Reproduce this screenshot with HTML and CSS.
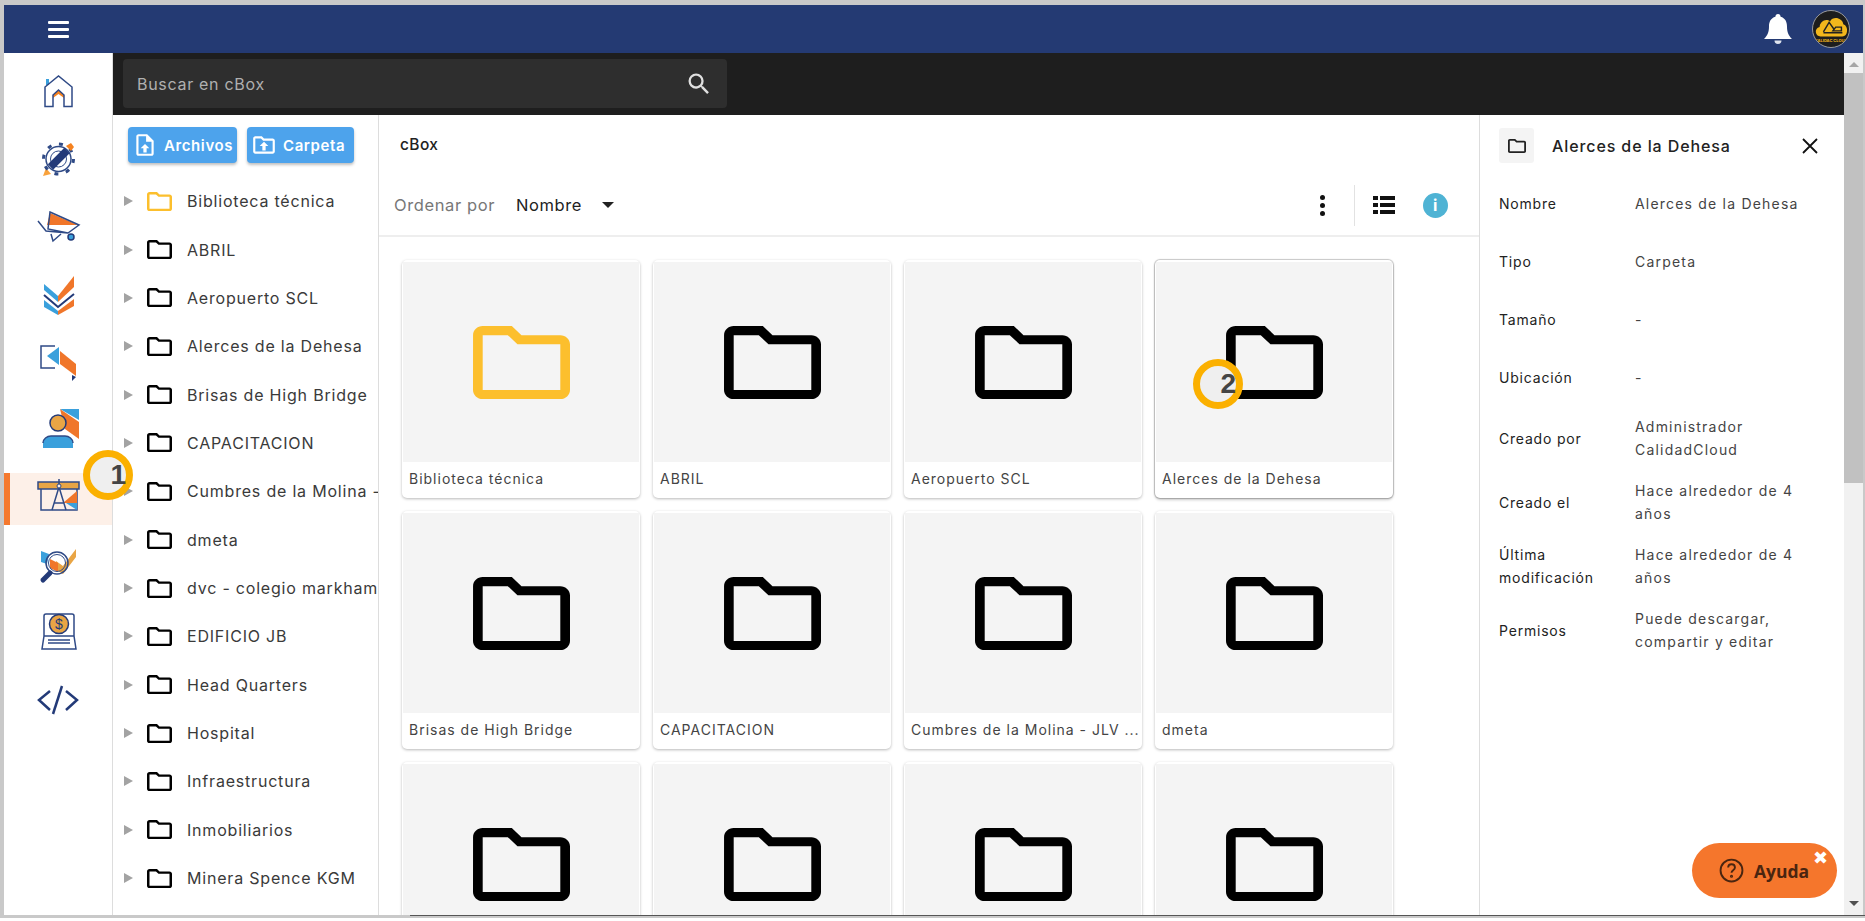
FILE: index.html
```html
<!DOCTYPE html>
<html lang="es">
<head>
  <meta charset="UTF-8" />
  <title>cBox</title>
  <link rel="stylesheet" href="styles.css">
</head>
<body>
  <svg class="defs" width="0" height="0">
    <symbol id="folder" viewBox="2 4 20 16" preserveAspectRatio="none">
      <path d="M9.17 6l2 2H20v10H4V6h5.17M10 4H4c-1.1 0-1.99.9-1.99 2L2 18c0 1.1.9 2 2 2h16c1.1 0 2-.9 2-2V8c0-1.1-.9-2-2-2h-8l-2-2z" />
    </symbol>
  </svg>

  <div class="frame">
    <header class="topbar">
      <div class="burger"><span></span><span></span><span></span></div>
      <div class="topbar-right">
        <svg class="bell" viewBox="0 0 28 30"><path d="M14 0c-1.6 0-2.6 1.2-2.6 2.8C6.800 4 5 8 5 12.500c0 5.500-1.500 9-5 12.500h28c-3.500-3.500-5-7-5-12.500C23 8 21.200 4 16.600 2.800 16.600 1.200 15.600 0 14 0z" fill="#fff"/><path d="M10.500 26.500a3.500 3.500 0 0 0 7 0z" fill="#dfe4ee"/></svg>
        <div class="avatar">
          <svg viewBox="0 0 38 38">
            <path d="M8 27c-6 0-7-9-1-10 0-6 7-10 11-6 3-6 13-4 14 3 6 2 5 13-1 13z" fill="#f3b71c"/>
            <path d="M11 22l6-10 5 7M17 12l-3 5M21 21h9v-4h-6zM11 23h20" fill="none" stroke="#222" stroke-width="1.500"/>
          </svg>
          <span>CALIDAC CLOUD</span>
        </div>
      </div>
    </header>

    <div class="body-row">
      <nav class="sidenav">
        <div class="nav-item">
          <svg viewBox="0 0 64 52"><rect x="20" y="14" width="3" height="6" fill="#3aa0dc"/><path d="M27 30l5.500-5 5.500 5v3l-5.500-4-5.500 4z" fill="#f5821f"/><path d="M19 41.500V22L32.500 11 46 22v19.500h-8V30l-5.500-5-5.500 5v11.500z" class="ln"/></svg>
        </div>
        <div class="nav-item">
          <svg viewBox="0 0 64 52"><path d="M20 35l-3 8 8-2z" fill="#f9a23c"/><circle cx="32.500" cy="26" r="15" fill="none" stroke="#2f4a86" stroke-width="3" stroke-dasharray="4 7.780"/><circle cx="32.500" cy="26" r="12.500" fill="#fff" stroke="#2f4a86" stroke-width="1.500"/><circle cx="32.500" cy="26" r="8" class="ln thin"/><path d="M24.500 34L41 17.500" stroke="#233a78" stroke-width="7.500"/><path d="M40 13l5-3 3 4-3 4z" fill="#f5821f"/></svg>
        </div>
        <div class="nav-item">
          <svg viewBox="0 0 64 52"><path d="M24 12L52 24H21z" fill="#f0762a"/><path d="M24 11L53 24 42 32 22 28z M12 20l8 10 22 2M25 33l2 7 8-7" class="ln"/><circle cx="45" cy="36" r="3" fill="#3aa0dc" stroke="#233a78" stroke-width="1.500"/></svg>
        </div>
        <div class="nav-item">
          <svg viewBox="0 0 64 52"><path d="M18 15l14 12v6L18 21z" fill="#3aa0dc"/><path d="M32 27L48 7v11L32 33z" fill="#f0762a"/><path d="M18 26l14 12 16-13" fill="none" stroke="#233a78" stroke-width="2"/><path d="M18 31l14 11v4l-14-8z" fill="#3aa0dc"/><path d="M32 42l16-12v7l-16 9z" fill="#f0762a"/></svg>
        </div>
        <div class="nav-item">
          <svg viewBox="0 0 64 52"><path d="M29 9H15v22h14" class="ln"/><path d="M21 19l12-9v18z" fill="#3aa0dc"/><path d="M34 14l16 13v12L34 27z" fill="#f0762a"/><path d="M46 38l4 2-4 4z" fill="#233a78"/></svg>
        </div>
        <div class="nav-item">
          <svg viewBox="0 0 64 52"><path d="M34 4h19v11z" fill="#3aa0dc"/><path d="M34 4l19 13v17L39 24z" fill="#f0762a"/><path d="M17 43v-5c0-4 4-7 8-7h14c4 0 8 3 8 7v5z" fill="#3aa0dc"/><path d="M17 38c0-4 4-7 8-7h14c4 0 8 3 8 7" class="ln"/><circle cx="32" cy="18" r="8" fill="#e9a545" stroke="#233a78" stroke-width="1.500"/></svg>
        </div>
        <div class="nav-item active">
          <svg viewBox="0 0 64 52"><rect x="12" y="9" width="41" height="7" fill="#e9a545" stroke="#2f4a86" stroke-width="1.500"/><path d="M15 16v21h36V16" class="ln"/><path d="M37 30l14-12v12z" fill="#f0762a"/><path d="M40 30h11v7z" fill="#3aa0dc"/><path d="M33 6v7M33 14l-7 23M33 14l7 23M28 30h10" class="ln"/><circle cx="33" cy="13" r="2" fill="#fdf0e8" stroke="#2f4a86"/></svg>
        </div>
        <div class="nav-item">
          <svg viewBox="0 0 64 52"><path d="M15 10l8 3-2 10-6-2z" fill="#3aa0dc"/><path d="M30 20l7 5 13-17v8L37 33l-7-4z" fill="#e9a545"/><path d="M24 18l8 4v9l-8-4z" fill="#f0762a"/><circle cx="31" cy="22" r="11" class="ln"/><circle cx="31" cy="22" r="8.500" class="ln thin"/><path d="M17 39l7-7" stroke="#233a78" stroke-width="5" stroke-linecap="round"/></svg>
        </div>
        <div class="nav-item">
          <svg viewBox="0 0 64 52"><path d="M18 27V7c0-1 1-2 2-2h26c1 0 2 1 2 2v20M18 27l-2 13h34l-2-13zM22 31h22M22 34h22" class="ln"/><circle cx="33" cy="15" r="9.500" fill="#e9a545" stroke="#233a78" stroke-width="1.500"/><text x="33" y="20" class="dollar">$</text></svg>
        </div>
        <div class="nav-item">
          <svg viewBox="0 0 64 52"><path d="M24 14L13 23l11 10M40 14l11 9-11 10" fill="none" stroke="#233a78" stroke-width="2.500"/><path d="M36 9l-9 28" stroke="#233a78" stroke-width="2.500"/></svg>
        </div>
      </nav>

      <div class="workspace">
        <div class="searchbar">
          <div class="search-input">
            <span>Buscar en cBox</span>
            <svg viewBox="0 0 24 24"><path d="M15.500 14h-.79l-.28-.27A6.470 6.470 0 0 0 16 9.500 6.500 6.500 0 1 0 9.500 16c1.610 0 3.090-.59 4.230-1.570l.27.28v.79l5 4.990L20.490 19l-4.990-5zm-6 0C7.010 14 5 11.990 5 9.500S7.010 5 9.500 5 14 7.010 14 9.500 11.990 14 9.500 14z"/></svg>
          </div>
        </div>

        <div class="panels">
          <aside class="tree">
            <div class="tree-actions">
              <button class="btn-upload">
                <svg viewBox="0 0 24 24"><path d="M14 2H6c-1.100 0-2 .9-2 2v16c0 1.100.9 2 2 2h12c1.100 0 2-.9 2-2V8l-6-6zm4 18H6V4h7v5h5v11zM8 15h2.500v4h3v-4H16l-4-4z"/></svg>
                Archivos
              </button>
              <button class="btn-upload">
                <svg viewBox="0 0 24 24"><path d="M20 6h-8l-2-2H4c-1.100 0-2 .9-2 2v12c0 1.100.9 2 2 2h16c1.100 0 2-.9 2-2V8c0-1.100-.9-2-2-2zm0 12H4V6h5.170l2 2H20v10zM8 13h2.500v4h3v-4H16l-4-4z"/></svg>
                Carpeta
              </button>
            </div>
            <ul class="tree-list">
              <li class="special"><i></i><svg><use href="#folder"/></svg>Biblioteca técnica</li>
              <li><i></i><svg><use href="#folder"/></svg>ABRIL</li>
              <li><i></i><svg><use href="#folder"/></svg>Aeropuerto SCL</li>
              <li><i></i><svg><use href="#folder"/></svg>Alerces de la Dehesa</li>
              <li><i></i><svg><use href="#folder"/></svg>Brisas de High Bridge</li>
              <li><i></i><svg><use href="#folder"/></svg>CAPACITACION</li>
              <li><i></i><svg><use href="#folder"/></svg>Cumbres de la Molina - JLV</li>
              <li><i></i><svg><use href="#folder"/></svg>dmeta</li>
              <li><i></i><svg><use href="#folder"/></svg>dvc - colegio markham</li>
              <li><i></i><svg><use href="#folder"/></svg>EDIFICIO JB</li>
              <li><i></i><svg><use href="#folder"/></svg>Head Quarters</li>
              <li><i></i><svg><use href="#folder"/></svg>Hospital</li>
              <li><i></i><svg><use href="#folder"/></svg>Infraestructura</li>
              <li><i></i><svg><use href="#folder"/></svg>Inmobiliarios</li>
              <li><i></i><svg><use href="#folder"/></svg>Minera Spence KGM</li>
            </ul>
          </aside>

          <main class="content">
            <div class="content-head">
              <div class="crumb">cBox</div>
              <div class="sort-row">
                <span class="sort-label">Ordenar por</span>
                <span class="sort-value">Nombre</span>
                <span class="caret"></span>
                <div class="sort-tools">
                  <span class="kebab"><b></b><b></b><b></b></span>
                  <span class="tool-sep"></span>
                  <svg class="list-icon" viewBox="0 0 22 18"><path d="M0 0h5v4H0zM7 0h15v4H7zM0 7h5v4H0zM7 7h15v4H7zM0 14h5v4H0zM7 14h15v4H7z"/></svg>
                  <span class="info">i</span>
                </div>
              </div>
            </div>
            <div class="card-grid">
              <div class="card special"><div class="thumb"><svg><use href="#folder"/></svg></div><div class="card-name">Biblioteca técnica</div></div>
              <div class="card"><div class="thumb"><svg><use href="#folder"/></svg></div><div class="card-name">ABRIL</div></div>
              <div class="card"><div class="thumb"><svg><use href="#folder"/></svg></div><div class="card-name">Aeropuerto SCL</div></div>
              <div class="card selected"><div class="thumb"><svg><use href="#folder"/></svg></div><div class="card-name">Alerces de la Dehesa</div></div>
              <div class="card"><div class="thumb"><svg><use href="#folder"/></svg></div><div class="card-name">Brisas de High Bridge</div></div>
              <div class="card"><div class="thumb"><svg><use href="#folder"/></svg></div><div class="card-name">CAPACITACION</div></div>
              <div class="card"><div class="thumb"><svg><use href="#folder"/></svg></div><div class="card-name">Cumbres de la Molina - JLV ...</div></div>
              <div class="card"><div class="thumb"><svg><use href="#folder"/></svg></div><div class="card-name">dmeta</div></div>
              <div class="card"><div class="thumb"><svg><use href="#folder"/></svg></div><div class="card-name">dvc - colegio markham</div></div>
              <div class="card"><div class="thumb"><svg><use href="#folder"/></svg></div><div class="card-name">EDIFICIO JB</div></div>
              <div class="card"><div class="thumb"><svg><use href="#folder"/></svg></div><div class="card-name">Head Quarters</div></div>
              <div class="card"><div class="thumb"><svg><use href="#folder"/></svg></div><div class="card-name">Hospital</div></div>
            </div>
          </main>

          <aside class="details">
            <div class="details-head">
              <div class="details-icon"><svg><use href="#folder"/></svg></div>
              <div class="details-title">Alerces de la Dehesa</div>
              <svg class="close" viewBox="0 0 16 16"><path d="M1 1l14 14M15 1L1 15"/></svg>
            </div>
            <dl class="props">
              <div><dt>Nombre</dt><dd>Alerces de la Dehesa</dd></div>
              <div><dt>Tipo</dt><dd>Carpeta</dd></div>
              <div><dt>Tamaño</dt><dd>-</dd></div>
              <div><dt>Ubicación</dt><dd>-</dd></div>
              <div><dt>Creado por</dt><dd>Administrador CalidadCloud</dd></div>
              <div><dt>Creado el</dt><dd>Hace alrededor de 4 años</dd></div>
              <div><dt>Última modificación</dt><dd>Hace alrededor de 4 años</dd></div>
              <div><dt>Permisos</dt><dd>Puede descargar, compartir y editar</dd></div>
            </dl>
          </aside>
        </div>
      </div>

      <div class="scrollbar">
        <span class="arrow up"></span>
        <div class="thumb-track"><div class="scroll-thumb"></div></div>
        <span class="arrow down"></span>
      </div>
    </div>

    <!-- marcadores del tutorial -->
    <div class="marker marker-1">1</div>
    <div class="marker marker-2">2</div>

    <div class="help">
      <svg viewBox="0 0 24 24"><circle cx="12" cy="12" r="10.500"/><path d="M8.800 9.200c0-4.300 6.500-4.300 6.500 0 0 2.700-3.300 2.500-3.300 5"/><circle cx="12" cy="17.500" r=".6"/></svg>
      <span>Ayuda</span>
      <span class="help-close">✖</span>
    </div>
  </div>
</body>
</html>
```

FILE: styles.css
```css
* {
  box-sizing: border-box;
}
html, body {
  margin: 0;
  height: 100%;
  background: #fff;
  overflow: hidden;
}
body {
  font-family: 'Inter', 'Liberation Sans', sans-serif;
  color: #333;
}
.defs {
  position: absolute;
}
.frame {
  position: relative;
  height: 918px;
  width: 1865px;
  border: solid #c9c9c9;
  border-width: 5px 2px 3px 4px;
  display: flex;
  flex-direction: column;
  background: #fff;
}
/* linea oscura del borde inferior */
.frame::after {
  content: "";
  position: absolute;
  left: 406px;
  right: -2px;
  bottom: -1px;
  height: 1px;
  background: #555;
}

/* barra superior */
.topbar {
  height: 48px;
  flex: none;
  background: #243a73;
  display: flex;
  align-items: center;
  justify-content: space-between;
  padding: 0 13px 0 44px;
}
.burger {
  width: 21px;
  display: flex;
  flex-direction: column;
  gap: 4px;
}
.burger span {
  height: 3px;
  background: #fff;
  border-radius: 1px;
}
.topbar-right {
  display: flex;
  align-items: center;
  gap: 20px;
}
.bell {
  width: 28px;
  height: 30px;
}
.avatar {
  position: relative;
  width: 38px;
  height: 38px;
  border-radius: 50%;
  background: #1d1d1d;
  border: 1px solid #9a9a9a;
  overflow: hidden;
}
.avatar svg {
  display: block;
  width: 100%;
  height: 100%;
}
.avatar span {
  position: absolute;
  left: 0;
  right: 0;
  bottom: 4px;
  text-align: center;
  white-space: nowrap;
  font-size: 4px;
  font-weight: 700;
  color: #f3b71c;
}

.body-row {
  flex: 1;
  display: flex;
  min-height: 0;
}

/* menu lateral */
.sidenav {
  width: 108px;
  flex: none;
  padding-top: 12px;
  display: flex;
  flex-direction: column;
  gap: 16px;
}
.nav-item {
  height: 52px;
  flex: none;
  display: flex;
  justify-content: center;
  border-left: 6px solid transparent;
  padding-right: 6px;
}
.nav-item svg {
  width: 64px;
  height: 52px;
}
.nav-item.active {
  background: #fdf0e8;
  border-left-color: #f5792e;
}
.ln {
  fill: none;
  stroke: #2f4a86;
  stroke-width: 1.5;
}
.thin {
  stroke-width: 1;
}
.dollar {
  font-family: 'Liberation Sans', sans-serif;
  font-size: 14px;
  text-anchor: middle;
  fill: #233a78;
}

.workspace {
  flex: 1;
  min-width: 0;
  display: flex;
  flex-direction: column;
  border-left: 1px solid #ddd;
}
.searchbar {
  height: 62px;
  flex: none;
  background: #1e1e1e;
  padding: 6px 10px;
}
.search-input {
  width: 604px;
  height: 49px;
  background: #2e2e2e;
  border-radius: 4px;
  display: flex;
  align-items: center;
  justify-content: space-between;
  padding: 0 14px;
  color: #b0b0b0;
  font-size: 16px;
  letter-spacing: 0.7px;
}
.search-input svg {
  width: 28px;
  height: 28px;
  fill: #e0e0e0;
}

.panels {
  flex: 1;
  min-height: 0;
  display: flex;
}

/* arbol de carpetas */
.tree {
  width: 266px;
  flex: none;
  border-right: 1px solid #ddd;
  overflow: hidden;
}
.tree-actions {
  display: flex;
  gap: 10px;
  padding: 12px 0 0 15px;
}
.btn-upload {
  height: 36px;
  padding: 0 4px;
  border: none;
  border-radius: 4px;
  background: #4da3ec;
  color: #fff;
  font-family: inherit;
  font-size: 15px;
  font-weight: 600;
  letter-spacing: 0.6px;
  display: flex;
  align-items: center;
  gap: 6px;
  box-shadow: 0 2px 3px rgba(0,0,0,0.25);
}
.btn-upload:first-child {
  width: 109px;
}
.btn-upload:last-child {
  width: 107px;
}
.btn-upload svg {
  width: 26px;
  height: 26px;
  flex: none;
  fill: #fff;
}
.tree-list {
  list-style: none;
  margin: 14px 0 0;
  padding: 0;
}
.tree-list li {
  height: 48.36px;
  display: flex;
  align-items: center;
  white-space: nowrap;
  font-size: 16px;
  letter-spacing: 0.8px;
  color: #3a3a3a;
  padding-left: 11px;
}
.tree-list i {
  width: 0;
  height: 0;
  flex: none;
  border-left: 9px solid #a3a3a3;
  border-top: 5px solid transparent;
  border-bottom: 5px solid transparent;
  margin-right: 14px;
}
.tree-list svg {
  width: 25px;
  height: 19px;
  flex: none;
  margin-right: 15px;
  fill: #000;
}
.tree-list li.special svg {
  fill: #fcbf2d;
}

/* contenido */
.content {
  flex: 1;
  min-width: 0;
  overflow: hidden;
}
.content-head {
  height: 122px;
  border-bottom: 2px solid #eee;
  padding: 0 0 0 15px;
}
.crumb {
  padding: 20px 0 0 6px;
  height: 60px;
  font-size: 15.5px;
  font-weight: 500;
  letter-spacing: 0.4px;
  color: #222;
}
.sort-row {
  display: flex;
  align-items: center;
  height: 60px;
  font-size: 16.5px;
  letter-spacing: 0.6px;
}
.sort-label {
  color: #777;
  width: 122px;
}
.sort-value {
  color: #222;
  width: 86px;
}
.caret {
  width: 0;
  height: 0;
  border-top: 6px solid #222;
  border-left: 6.5px solid transparent;
  border-right: 6.5px solid transparent;
}
.sort-tools {
  margin-left: auto;
  display: flex;
  align-items: center;
  padding-right: 31px;
}
.kebab {
  display: flex;
  flex-direction: column;
  gap: 3px;
}
.kebab b {
  width: 5px;
  height: 5px;
  border-radius: 50%;
  background: #111;
}
.tool-sep {
  width: 1px;
  height: 41px;
  background: #e2e2e2;
  margin: 0 18px 0 29px;
}
.list-icon {
  width: 22px;
  height: 18px;
  fill: #111;
  margin-right: 28px;
}
.info {
  width: 25px;
  height: 25px;
  border-radius: 50%;
  background: #4fb3d4;
  color: #fff;
  font-size: 16px;
  font-weight: 700;
  text-align: center;
  line-height: 25px;
}
.card-grid {
  display: grid;
  grid-template-columns: repeat(4, 238px);
  column-gap: 13px;
  row-gap: 13px;
  padding: 23px 0 0 23px;
}
.card {
  height: 238px;
  background: #fff;
  border-radius: 5px;
  padding: 2px 1px 0;
  box-shadow: 0 1px 3px rgba(0,0,0,0.28);
}
.card.selected {
  box-shadow: 0 0 1px 1px rgba(0,0,0,0.22), 0 2px 3px rgba(0,0,0,0.2);
}
.thumb {
  height: 200px;
  background: #f4f4f4;
  display: flex;
  align-items: center;
  justify-content: center;
}
.thumb svg {
  width: 97px;
  height: 73px;
  fill: #000;
}
.card.special .thumb svg {
  fill: #fcbf2d;
}
.card-name {
  padding: 8px 0 0 6px;
  font-size: 14px;
  letter-spacing: 1px;
  color: #444;
  white-space: nowrap;
  overflow: hidden;
}

/* detalle */
.details {
  width: 365px;
  flex: none;
  border-left: 1px solid #ddd;
  padding: 0 20px 0 19px;
  overflow: hidden;
}
.details-head {
  display: flex;
  align-items: center;
  height: 35px;
  margin-top: 13px;
}
.details-icon {
  width: 35px;
  height: 35px;
  background: #f4f4f4;
  border-radius: 3px;
  display: flex;
  align-items: center;
  justify-content: center;
  margin-right: 18px;
}
.details-icon svg {
  width: 18px;
  height: 14px;
  fill: #222;
}
.details-title {
  flex: 1;
  font-size: 16px;
  font-weight: 500;
  letter-spacing: 0.9px;
  color: #222;
}
.close {
  width: 16px;
  height: 16px;
  margin-right: 6px;
  stroke: #111;
  stroke-width: 1.8;
}
.props {
  margin: 20px 0 0;
}
.props > div {
  display: flex;
  align-items: center;
  min-height: 40px;
  margin-bottom: 18px;
  font-size: 14px;
  line-height: 23px;
  letter-spacing: 1.2px;
}
.props dt {
  width: 136px;
  flex: none;
  padding-right: 16px;
  letter-spacing: 0.8px;
  color: #222;
}
.props dd {
  margin: 0;
  color: #444;
  width: 178px;
}

/* scroll */
.scrollbar {
  width: 19px;
  flex: none;
  background: #f1f1f1;
  display: flex;
  flex-direction: column;
  align-items: center;
}
.arrow {
  flex: none;
  width: 0;
  height: 0;
  border-left: 5px solid transparent;
  border-right: 5px solid transparent;
}
.arrow.up {
  margin: 9px 0 6px;
  border-bottom: 5px solid #a6a6a6;
}
.arrow.down {
  margin: 6px 0 9px;
  border-top: 5px solid #505050;
}
.thumb-track {
  flex: 1;
  width: 100%;
}
.scroll-thumb {
  height: 410px;
  width: 100%;
  background: #c1c1c1;
}

.marker {
  position: absolute;
  width: 50px;
  height: 50px;
  border-radius: 50%;
  border: 7px solid #fbb000;
  background: #efefef;
  color: #444;
  font-family: 'Liberation Sans', sans-serif;
  font-size: 28px;
  font-weight: 700;
  line-height: 36px;
  text-align: right;
}
.marker-1 {
  left: 79px;
  top: 445px;
}
.marker-2 {
  left: 1189px;
  top: 354px;
}

.help {
  position: absolute;
  left: 1688px;
  top: 838px;
  width: 145px;
  height: 55px;
  border-radius: 28px;
  background: #f5762c;
  display: flex;
  align-items: center;
  padding-left: 27px;
  color: #4a2510;
  font-family: 'Open Sans', sans-serif;
  font-weight: 700;
  font-size: 17.5px;
  gap: 10px;
}
.help svg {
  width: 25px;
  height: 25px;
  fill: none;
  stroke: #4a2510;
  stroke-width: 1.8;
}
.help-close {
  position: absolute;
  right: 9px;
  top: 4px;
  font-family: 'DejaVu Sans', sans-serif;
  color: #fff;
  font-size: 18px;
  font-weight: 400;
}
```
